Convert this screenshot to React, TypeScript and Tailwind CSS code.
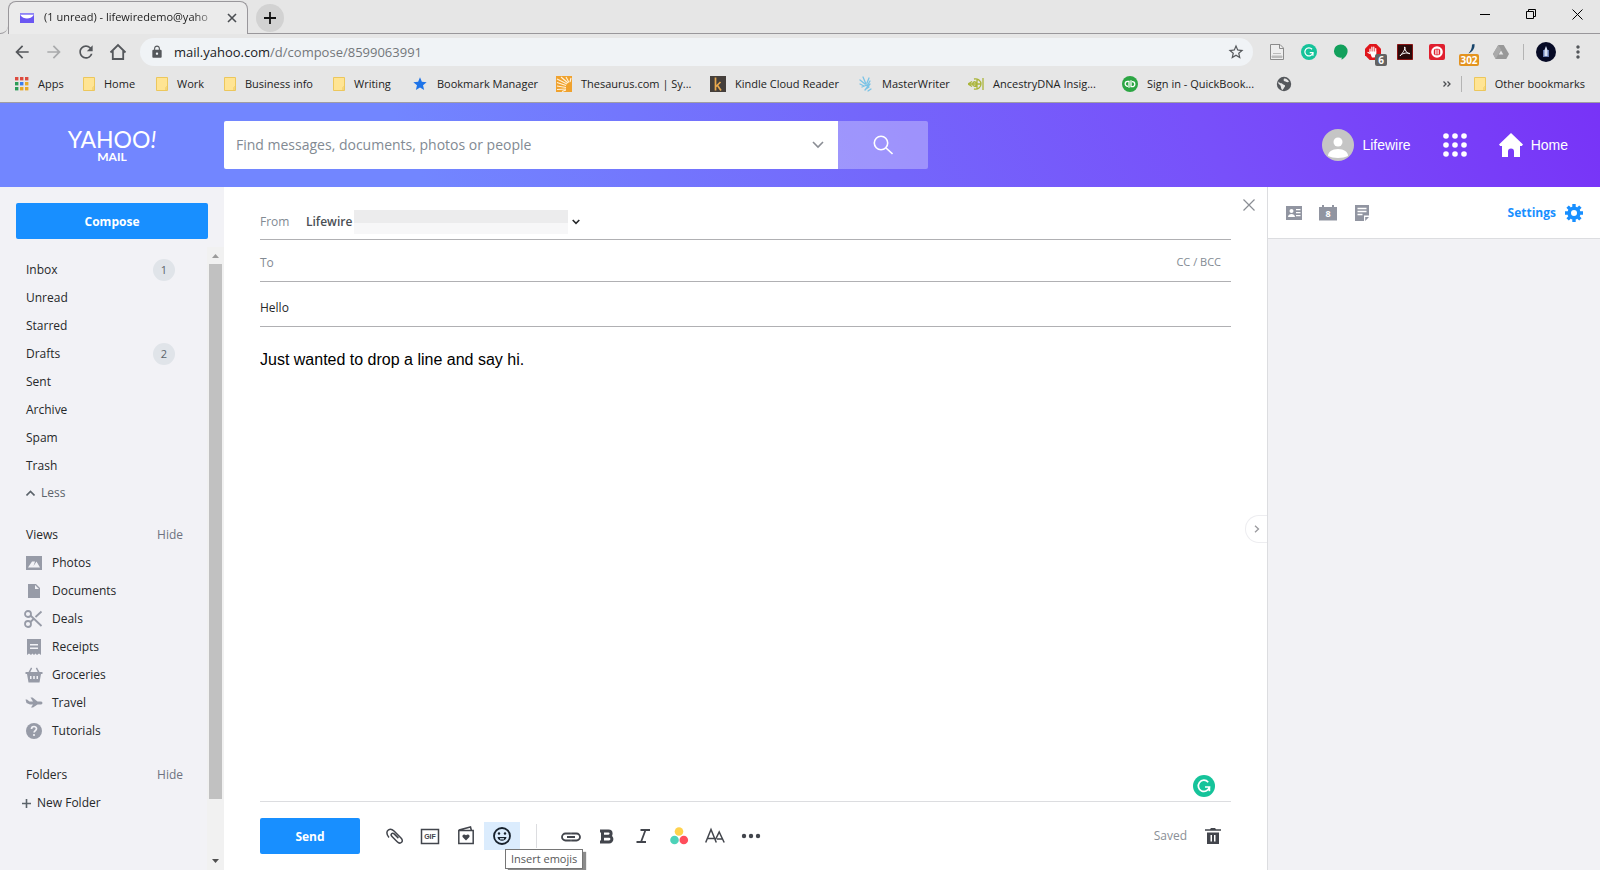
import React, { useState } from "react";
import {
    MdArrowBack,
    MdArrowForward,
    MdLock,
    MdMoreVert,
    MdRefresh,
    MdStar,
    MdStarBorder,
} from "react-icons/md";

type BookmarkProps = { label?: string; icon: React.ReactNode; width: string };

const FolderIcon = () => (
    <svg viewBox="0 0 12 14" className="h-3.5 w-3 shrink-0">
        <path d="M.5.5h11v13H.5z" fill="#ffe493" stroke="#ecc75c" />
        <path d="M10 13.500V10.500l1.500-1.500" fill="none" stroke="#ecc75c" />
    </svg>
);

const AppsIcon = () => (
    <svg viewBox="0 0 14 14" className="h-3.5 w-3.5 shrink-0">
        {["#dd4b3e", "#dd4b3e", "#dd4b3e", "#2b9c57", "#3b7ded", "#e8a927", "#2b9c57", "#e8a927", "#e8a927"].map((c, i) => (
            <rect key={i} x={(i % 3) * 5} y={Math.floor(i / 3) * 5} width="3.400" height="3.400" fill={c} />
        ))}
    </svg>
);

const ThesaurusIcon = () => (
    <svg viewBox="0 0 16 16" className="size-4 shrink-0">
        <path fill="#f0a22e" d="M0 0h16v16H0z" />
        <path
            d="M1 3l10 5M1 6.500l9 3M1 10l9 1.500M1 13.500l9-.5M5 1l7 6M10 1l3 5.500M15 2l-1 4M6 15.500l4-1.500"
            stroke="#fff3dc"
            strokeWidth="1.100"
            fill="none"
        />
        <path d="M16 6.500c-4 .5-6.500 4-5.500 9.500H16z" fill="#f0a22e" />
    </svg>
);

const KindleIcon = () => (
    <svg viewBox="0 0 16 16" className="size-4 shrink-0">
        <path fill="#453f3b" d="M0 0h16v16H0z" />
        <path d="M5.500 1.500v13M10.500 6l-5 5M7.500 9.500l3.500 5" stroke="#e9a94e" strokeWidth="1.700" fill="none" />
    </svg>
);

const MasterWriterIcon = () => (
    <svg viewBox="0 0 14 16" className="h-4 w-3.5 shrink-0">
        <path
            d="M1 4l5 4M4 1l3 7M8 7l2-5M3 11l5-2M6 14l5-6M9 15l3-2M11 5l-3 5M1 8l4 2M10 11l-3 2"
            stroke="#79c3e6"
            strokeWidth="1.300"
            fill="none"
            strokeLinecap="round"
        />
    </svg>
);

const AncestryIcon = () => (
    <svg viewBox="0 0 16 14" className="h-3.5 w-4 shrink-0">
        <path
            d="M0 7h13M4.500 7C5 4 8 4 9 7c-1 3-4 3-4.500 0zM6 2c4-1 7 2 7 5s-3 6-7 5M9 1.500v11M15 1v12M0 7l4-2.500M0 7l4 2.500"
            stroke="#aab53a"
            strokeWidth="1.300"
            fill="none"
        />
    </svg>
);

const QuickBooksIcon = () => (
    <svg viewBox="0 0 16 16" className="size-4 shrink-0">
        <circle cx="8" cy="8" r="8" fill="#2ca644" />
        <path
            d="M7 11.800V5.300H5.700a2.500 2.500 0 0 0 0 5h.3M9 4.200v6.500h1.300a2.500 2.500 0 0 0 0-5H10"
            stroke="#fff"
            strokeWidth="1.300"
            fill="none"
        />
    </svg>
);

const GlobeIcon = () => (
    <svg viewBox="0 0 16 16" className="size-4 shrink-0">
        <circle cx="8" cy="8" r="7.200" fill="#55585c" />
        <path d="M2.500 5.500c1.500 2.500 3 1 4 2.500 1 1 3 .5 2.500 2.500-1 1-1 2-2.500 3.500-2-1-1-3.500-2.500-5-1.500-1-2-1.500-1.500-3.500zM8 2.500c2-.5 4 1 5 3-1 1.500-2.500.5-3.500 0-1.500 0-2.500-1-1.500-3z" fill="#e6e6e6" />
    </svg>
);

const bookmarks: BookmarkProps[] = [
    { label: "Apps", icon: <AppsIcon />, width: "w-[68px]" },
    { label: "Home", icon: <FolderIcon />, width: "w-[73px]" },
    { label: "Work", icon: <FolderIcon />, width: "w-[68px]" },
    { label: "Business info", icon: <FolderIcon />, width: "w-[109px]" },
    { label: "Writing", icon: <FolderIcon />, width: "w-[79px]" },
    { label: "Bookmark Manager", icon: <MdStar className="size-4 shrink-0 text-[#1f74e8]" />, width: "w-[144px]" },
    { label: "Thesaurus.com | Sy...", icon: <ThesaurusIcon />, width: "w-[154px]" },
    { label: "Kindle Cloud Reader", icon: <KindleIcon />, width: "w-[149px]" },
    { label: "MasterWriter", icon: <MasterWriterIcon />, width: "w-[109px]" },
    { label: "AncestryDNA Insig...", icon: <AncestryIcon />, width: "w-[154px]" },
    { label: "Sign in - QuickBook...", icon: <QuickBooksIcon />, width: "w-[154px]" },
    { icon: <GlobeIcon />, width: "w-4" },
];

const GrammarlyIcon = ({ className }: { className: string }) => (
    <svg viewBox="0 0 22 22" className={className}>
        <circle cx="11" cy="11" r="11" fill="#15c39a" />
        <path d="M15.200 7.200A5.600 5.600 0 1 0 16.400 12H12" stroke="#fff" strokeWidth="1.700" fill="none" />
        <path d="M16.400 12v4.200" stroke="#fff" strokeWidth="1.700" />
    </svg>
);

const Extensions = () => (
    <div className="flex items-center gap-4 pl-4">
        <svg viewBox="0 0 16 16" className="size-4">
            <path d="M1.500.5h9.500l3.500 3.500v11.500h-13z" fill="#eee" stroke="#8b8b8b" />
            <path d="M10.500.5v4h4" fill="none" stroke="#8b8b8b" />
            <path d="M4 9.500h8M3 12h10v1.500H3z" fill="#bbb" stroke="#bbb" />
        </svg>
        <GrammarlyIcon className="size-4" />
        <svg viewBox="0 0 16 16" className="size-4">
            <path d="M8 .5a6.600 6.600 0 0 1 6.600 6.600c0 4-3 7-6 8.700v-2.200A6.600 6.600 0 1 1 8 .5z" fill="#12a05c" />
        </svg>
        <div className="relative">
            <svg viewBox="0 0 16 16" className="size-4">
                <path d="M4.700 0h6.600L16 4.700v6.600L11.300 16H4.700L0 11.300V4.700z" fill="#e0151b" />
                <path d="M5 8V5M6.900 8V3.200M8.800 8V3M10.700 8V4.500M3 8.500l2 1" stroke="#fff" strokeWidth="1.200" strokeLinecap="round" />
                <path d="M4.400 7.500h6.900v3.500L9.500 13.500H7z" fill="#fff" />
            </svg>
            <span className="absolute -right-1.5 top-2.5 w-3 rounded-xs bg-[#636363] text-center text-[10px] font-bold leading-3 text-white">
                6
            </span>
        </div>
        <svg viewBox="0 0 16 16" className="size-4">
            <path fill="#2b0b0b" stroke="#8a1414" d="M.5.5h15v15H.5z" />
            <path
                d="M7.500 3c1.500 0 0 4-4.500 9 1-2 6-4 10-2.500-2 1-5-2.500-5.500-6.500z"
                stroke="#fff"
                fill="none"
            />
        </svg>
        <svg viewBox="0 0 16 16" className="size-4">
            <rect width="16" height="16" rx="2" fill="#e01f2f" />
            <circle cx="8" cy="8" r="5.800" fill="#fff" />
            <rect x="4.800" y="4.800" width="6.400" height="6.400" rx="2" fill="#e01f2f" />
            <path d="M6.900 5.500v5M9.100 5.500v5" stroke="#fff" strokeWidth="1.200" />
        </svg>
        <div className="relative">
            <svg viewBox="0 0 16 16" className="size-4">
                <path d="M13.500 0c.5 4-1.500 7.500-6 9.500 2.500-3 3.500-5.500 3.500-9z" fill="#18456b" />
            </svg>
            <span className="absolute -left-0.5 top-2.5 w-5 rounded-xs bg-[#e39320] text-center text-[10px] font-bold leading-3 text-white">
                302
            </span>
        </div>
        <svg viewBox="0 0 16 14" className="h-3.5 w-4">
            <path d="M5.300 0h5.400L16 9l-2.700 5H2.700L0 9z" fill="#989898" />
            <path d="M5.300 0L8 4.600 2.700 14 0 9z" fill="#aaa" />
            <path d="M8 5.500l2.300 4H5.700z" fill="#e5e5e5" />
        </svg>
    </div>
);

const BrowserChrome = () => (
    <header className="border-b border-[#a09da3] bg-[#e6e6e6] text-[11px] text-[#222]">
        <div className="flex h-[34px] items-end">
            <div className="h-2 w-2 rounded-br-lg border-b border-[#99979b]" />
            <div className="relative flex h-[33px] w-60 items-center pl-3 pr-2">
                <div className="absolute inset-x-0 top-0 bottom-0 rounded-t-lg border-x border-t border-[#99979b] bg-[#ebebeb]" />
                <svg viewBox="0 0 14 10" className="relative h-2.5 w-3.5 shrink-0">
                    <path fill="#6b57f2" d="M0 0h14v10H0z" />
                    <path fill="#fff" d="M0 1.500h14c-2 3-4.500 4-7 4s-5-1-7-4z" />
                    <path fill="#8f84f5" d="M0 0h14v1.500H0z" />
                </svg>
                <p className="relative ml-2.5 flex-1 overflow-hidden whitespace-nowrap mask-r-from-85%">
                    (1 unread) - lifewiredemo@yaho
                </p>
                <button aria-label="Close tab" className="relative ml-1 flex size-4 items-center justify-center">
                    <svg viewBox="0 0 10 10" className="size-2.5">
                        <path d="M1 1l8 8M9 1L1 9" stroke="#4b4e52" strokeWidth="1.600" />
                    </svg>
                </button>
            </div>
            <div className="flex h-full flex-1 items-start justify-between border-b border-[#99979b]">
                <button aria-label="New tab" className="ml-2 mt-1 flex size-7 items-center justify-center rounded-full bg-[#d2d2d2]">
                    <svg viewBox="0 0 12 12" className="size-3">
                        <path d="M6 0v12M0 6h12" stroke="#111" strokeWidth="1.800" />
                    </svg>
                </button>
                <div className="flex items-center gap-9 pr-[17px] pt-2">
                    <button aria-label="Minimize" className="flex h-3 w-2.5 items-center">
                        <span className="h-px w-2.5 bg-black" />
                    </button>
                    <button aria-label="Restore">
                        <svg viewBox="0 0 10 10" className="size-2.5" fill="none" stroke="#000">
                            <path d="M.5 2.500h7v7h-7zM2.500 2.500v-2h7v7h-2" />
                        </svg>
                    </button>
                    <button aria-label="Close window">
                        <svg viewBox="0 0 11 11" className="size-[11px]">
                            <path d="M.5.5l10 10M10.500.5l-10 10" stroke="#000" />
                        </svg>
                    </button>
                </div>
            </div>
        </div>

        <div className="flex h-9 items-center pl-3 pr-3 text-[#54575b]">
            <div className="flex items-center gap-3">
                <button aria-label="Back"><MdArrowBack className="size-5" /></button>
                <button aria-label="Forward"><MdArrowForward className="size-5 text-[#a9aaac]" /></button>
                <button aria-label="Reload"><MdRefresh className="size-5" /></button>
                <button aria-label="Home page">
                    <svg viewBox="0 0 20 20" className="size-5" fill="none" stroke="currentColor" strokeWidth="1.800">
                        <path d="M2.500 10.500L10 3l7.500 7.500M4.800 9v8h10.400V9" />
                    </svg>
                </button>
            </div>
            <div className="ml-3 flex h-7 flex-1 items-center rounded-full bg-[#f0f3f6] pl-2.5 pr-2">
                <MdLock className="size-3.5" />
                <p className="ml-2.5 flex-1 text-[13px] leading-5">
                    <span className="text-[#202124]">mail.yahoo.com</span>
                    <span className="text-[#73777b]">/d/compose/8599063991</span>
                </p>
                <button aria-label="Bookmark this page"><MdStarBorder className="size-[18px]" /></button>
            </div>
            <Extensions />
            <div className="ml-3.5 h-4 w-px bg-[#b4b4b4]" />
            <div className="ml-3 size-5 rounded-full bg-[#070b26] p-1">
                <svg viewBox="0 0 12 12" className="size-3">
                    <path d="M3 4h6v7H3z" fill="#6a7fb5" />
                    <path d="M6 0l1.500 4v6h-3V4z" fill="#d7e2f6" />
                </svg>
            </div>
            <button aria-label="Menu" className="ml-3"><MdMoreVert className="size-5" /></button>
        </div>

        <nav className="flex h-8 items-center pb-1 pl-[15px] pr-[15px]">
            {bookmarks.map((b, i) => (
                <a key={i} href="#" aria-label={b.label ?? "Web page"} className={`flex shrink-0 items-center gap-[9px] ${b.width}`}>
                    {b.icon}
                    {b.label && <span className="whitespace-nowrap">{b.label}</span>}
                </a>
            ))}
            <div className="ml-auto flex items-center">
                <button aria-label="More bookmarks">
                    <svg viewBox="0 0 8 6" className="h-1.5 w-2" fill="none" stroke="#4b4e52" strokeWidth="1.300">
                        <path d="M.5.5L3 3 .5 5.500M4.500.5L7 3 4.500 5.500" />
                    </svg>
                </button>
                <div className="ml-2.5 h-4 w-px bg-[#b4b4b4]" />
                <a href="#" className="ml-3 flex items-center gap-[9px]">
                    <FolderIcon />
                    Other bookmarks
                </a>
            </div>
        </nav>
    </header>
);

const YahooHeader = () => (
    <div className="flex h-[84px] items-center bg-[linear-gradient(65deg,#7286ff_26%,#7466fb_55%,#7850fa_75%,#7833f7_100%)] text-white">
        <a href="#" aria-label="Yahoo Mail" className="flex w-56 flex-col items-center font-['Lato']">
            <span className="text-[23px] leading-6">
                YAHOO<span className="italic">!</span>
            </span>
            <span className="text-xs font-bold leading-3">MAIL</span>
        </a>
        <form className="flex h-12 w-[704px]" onSubmit={(e) => e.preventDefault()}>
            <div className="flex flex-1 items-center rounded-l-xs bg-white pl-3 pr-3.5">
                <input
                    aria-label="Search"
                    placeholder="Find messages, documents, photos or people"
                    className="flex-1 text-sm text-black outline-none placeholder:text-[#828a93]"
                />
                <button type="button" aria-label="Search options">
                    <svg viewBox="0 0 12 8" className="h-2 w-3" fill="none" stroke="#8a8d94" strokeWidth="1.600">
                        <path d="M1 1l5 5 5-5" />
                    </svg>
                </button>
            </div>
            <button aria-label="Search mail" className="flex w-[90px] items-center justify-center rounded-r-xs bg-white/30">
                <svg viewBox="0 0 20 20" className="size-5" fill="none" stroke="#fff" strokeWidth="1.600">
                    <circle cx="8" cy="8" r="6.700" />
                    <path d="M13 13l6.500 6" />
                </svg>
            </button>
        </form>
        <div className="ml-auto flex items-center pr-8 font-['Liberation_Sans',sans-serif] text-sm">
            <a href="#" className="flex items-center gap-2">
                <svg viewBox="0 0 32 32" className="size-8">
                    <circle cx="16" cy="16" r="16" fill="#c5c5c5" />
                    <circle cx="16" cy="13" r="4.500" fill="#fff" />
                    <path d="M6 27c0-4 4-7 10-7s10 3 10 7c-5 2.500-15 2.500-20 0z" fill="#fff" />
                </svg>
                Lifewire
            </a>
            <button aria-label="Yahoo apps" className="ml-8">
                <svg viewBox="0 0 24 24" className="size-6" fill="#fff">
                    {[3, 12, 21].map((y) => [3, 12, 21].map((x) => <circle key={`${x}-${y}`} cx={x} cy={y} r="2.800" />))}
                </svg>
            </button>
            <a href="#" className="ml-8 flex items-center gap-2">
                <svg viewBox="0 0 24 24" className="size-6" fill="#fff">
                    <path d="M12 0l12 11.500-1.200 1.500H21v11h-6v-5.500a3 3 0 0 0-6 0V24H3V13H1.200L0 11.500z" />
                </svg>
                Home
            </a>
        </div>
    </div>
);

const mailboxes = [
    { label: "Inbox", count: 1 },
    { label: "Unread" },
    { label: "Starred" },
    { label: "Drafts", count: 2 },
    { label: "Sent" },
    { label: "Archive" },
    { label: "Spam" },
    { label: "Trash" },
];

const views = [
    {
        label: "Photos",
        icon: <path fillRule="evenodd" d="M1 2h16v14H1zM3 13.500h12l-3.500-6-3 4.500L10 7.500H7L3 13.500z" />,
    },
    { label: "Documents", icon: <path d="M3 2h8l4 4v10H3zM10 3v4h4z" fillRule="evenodd" /> },
    {
        label: "Deals",
        icon: (
            <g fill="none" stroke="currentColor" strokeWidth="1.800">
                <circle cx="3" cy="4" r="3" />
                <circle cx="3" cy="14" r="3" />
                <path d="M5.500 5.500L16.500 16M5.500 12l3-3M10.500 7L16.500 1.500" />
            </g>
        ),
    },
    {
        label: "Receipts",
        icon: <path fillRule="evenodd" d="M2 1h14v16l-2-1.500-2 1.500-1.500-1.500L9 17l-1.500-1.500L6 17l-2-1.500L2 17zM5 6v1.500h8V6zM5 9.500V11h8V9.500z" />,
    },
    {
        label: "Groceries",
        icon: (
            <path
                fillRule="evenodd"
                d="M.5 6h3L6 1.500l1.200.7L5.300 6h7.400l-1.900-3.800 1.200-.7L14.500 6h3v2H16l-1.500 8.500h-11L2 8H.5zM5 10v3h1.500v-3zM8.200 10v3h1.600v-3zM11.500 10v3H13v-3z"
            />
        ),
    },
    { label: "Travel", icon: <path d="M.5 5.500h1.500l2.500 2H8L5.500 3.500h2l5 4h3c1.200 0 2 .7 2 1.500s-.8 1.500-2 1.500h-3L8 13.500H6l2-3H5L1.500 9z" /> },
    {
        label: "Tutorials",
        icon: (
            <>
                <circle cx="9" cy="9" r="8" />
                <path d="M6.500 7c0-3.300 5-3.200 5-.3 0 1.800-2.400 1.900-2.400 3.800" fill="none" stroke="#f2f2f6" strokeWidth="1.700" />
                <circle cx="9" cy="13" r="1.100" fill="#f2f2f6" />
            </>
        ),
    },
];

const SectionTitle = ({ label }: { label: string }) => (
    <div className="flex h-7 items-center justify-between pr-6">
        <h2>{label}</h2>
        <button className="text-[#6e7280]">Hide</button>
    </div>
);

const Sidebar = () => (
    <aside className="flex w-56 shrink-0 flex-col bg-[#f2f2f6] text-xs text-[#26282a]">
        <button className="ml-4 mr-4 mt-4 h-9 shrink-0 rounded-xs bg-[#188fff] pt-0.5 font-bold text-white">Compose</button>
        <div className="mt-2 flex min-h-0 flex-1">
            <nav className="flex-1 overflow-hidden pl-[26px] pt-[9px]">
                <ul>
                    {mailboxes.map((m) => (
                        <li key={m.label} className="flex h-7 items-center justify-between pr-8">
                            <a href="#">{m.label}</a>
                            {m.count && (
                                <span className="flex size-[22px] items-center justify-center rounded-full bg-[#e0e4e9] text-[11px] text-[#5b636a]">
                                    {m.count}
                                </span>
                            )}
                        </li>
                    ))}
                </ul>
                <button className="flex h-[26px] items-center gap-1.5 text-[#5b636a]">
                    <svg viewBox="0 0 9 6" className="h-1.5 w-[9px]" fill="none" stroke="currentColor" strokeWidth="1.600">
                        <path d="M.5 5.500l4-4 4 4" />
                    </svg>
                    Less
                </button>
                <div className="mt-[15px]">
                    <SectionTitle label="Views" />
                    <ul>
                        {views.map((v) => (
                            <li key={v.label}>
                                <a href="#" className="flex h-7 items-center gap-2.5">
                                    <svg viewBox="1 1 16 16" className="size-4 overflow-visible text-[#979ba7]" fill="currentColor">
                                        {v.icon}
                                    </svg>
                                    {v.label}
                                </a>
                            </li>
                        ))}
                    </ul>
                </div>
                <div className="mt-4">
                    <SectionTitle label="Folders" />
                    <button className="-ml-1 flex h-7 items-center gap-1.5">
                        <svg viewBox="0 0 9 9" className="size-[9px]" stroke="#5b636a" strokeWidth="1.600">
                            <path d="M4.500 0v9M0 4.500h9" />
                        </svg>
                        New Folder
                    </button>
                </div>
            </nav>
            <div className="flex w-[17px] flex-col items-center bg-[#f1f1f1]">
                <svg viewBox="0 0 7 4" className="mb-1.5 mt-[7px] h-1 w-[7px] shrink-0" fill="#9b9b9b">
                    <path d="M0 4l3.500-4L7 4z" />
                </svg>
                <div className="w-full flex-1">
                    <div className="mx-auto h-[91%] w-[13px] bg-[#c1c1c1]" />
                </div>
                <svg viewBox="0 0 7 4" className="my-[7px] h-1 w-[7px] shrink-0" fill="#505050">
                    <path d="M0 0l3.500 4L7 0z" />
                </svg>
            </div>
        </div>
    </aside>
);

const GifIcon = () => (
    <svg viewBox="0 0 20 20" className="size-5">
        <path d="M1.500 3.500h17v14h-17z" fill="none" stroke="currentColor" strokeWidth="1.500" />
        <text x="10" y="13" textAnchor="middle" fontSize="7" fontWeight="bold" fontFamily="Liberation Sans" fill="currentColor">
            GIF
        </text>
    </svg>
);

const leftTools = [
    {
        label: "Attach files",
        icon: (
            <svg viewBox="0 0 20 20" className="size-5" fill="none" stroke="currentColor" strokeWidth="1.500">
                <path d="M5 11.500C2 8 2.500 5 4.500 3.800s4-.3 5.500 1.200l7 7c1.500 1.500 1.700 3.200.6 4.300s-2.900 1-4.400-.5L8 10.500c-1-1-1.200-2-.4-2.800s1.800-.6 2.800.4l4 4" />
            </svg>
        ),
    },
    { label: "Insert GIFs", icon: <GifIcon /> },
    {
        label: "Insert greeting card",
        icon: (
            <svg viewBox="0 0 20 20" className="size-5" fill="none" stroke="currentColor" strokeWidth="1.500">
                <path d="M2.800 4.500h14.400v13H2.800zM3 4l11.500-3 .8 3" />
                <path d="M10 14.500l-3.200-3.200c-1.500-2 1.200-4 3.200-2 2-2 4.700 0 3.200 2z" fill="currentColor" stroke="none" />
            </svg>
        ),
    },
    {
        label: "Insert emojis",
        icon: (
            <svg viewBox="0 0 20 20" className="size-5" fill="none" stroke="currentColor" strokeWidth="1.800">
                <circle cx="10" cy="10" r="8" />
                <path d="M5.500 11h9c-.5 5-8.500 5-9 0z" fill="currentColor" stroke="none" />
                <path d="M8 12.800h4" stroke="#dbecfd" strokeWidth="1.300" />
                <circle cx="7" cy="7.500" r="1.200" fill="currentColor" stroke="none" />
                <circle cx="13" cy="7.500" r="1.200" fill="currentColor" stroke="none" />
            </svg>
        ),
    },
];

const rightTools = [
    {
        label: "Insert link",
        icon: (
            <svg viewBox="0 0 20 20" className="size-5" fill="none" stroke="currentColor" strokeWidth="1.800">
                <path d="M9 13.500v1H4.500a3.500 3.500 0 0 1 0-7H9v1M11 8.500v-1h4.500a3.500 3.500 0 0 1 0 7H11v-1M6 11h8" />
            </svg>
        ),
    },
    {
        label: "Bold",
        icon: (
            <svg viewBox="0 0 20 20" className="size-5" fill="none" stroke="currentColor" strokeWidth="3">
                <path d="M5.500 5h6a2.600 2.600 0 0 1 0 5.200h-6M5.500 10.200H12a2.800 2.800 0 0 1 0 5.800H5.500V5M3 5h3M3 16h3" />
            </svg>
        ),
    },
    {
        label: "Italic",
        icon: (
            <svg viewBox="0 0 20 20" className="size-5" fill="none" stroke="currentColor" strokeWidth="1.800">
                <path d="M7.500 4h9.500M3.500 16H13M12.500 4L8 16" />
            </svg>
        ),
    },
    {
        label: "Text color",
        icon: (
            <svg viewBox="0 0 20 20" className="size-5">
                <circle cx="10" cy="5.500" r="4.300" fill="#ffd24d" />
                <circle cx="5.500" cy="14" r="4.300" fill="#4dd2b8" />
                <circle cx="14.800" cy="14" r="4.300" fill="#ff4d5b" />
            </svg>
        ),
    },
    {
        label: "Text size",
        icon: (
            <svg viewBox="0 0 20 20" className="size-5" fill="none" stroke="currentColor" strokeWidth="1.500">
                <path d="M.7 16.500L6 3.500l5.300 13M2.500 12.500h7M10.500 13.500l3.700-7.500 5 10.500M12 13h5.500" />
            </svg>
        ),
    },
    {
        label: "More formatting",
        icon: (
            <svg viewBox="0 0 20 20" className="size-5" fill="currentColor">
                <circle cx="3" cy="10" r="2.200" />
                <circle cx="10" cy="10" r="2.200" />
                <circle cx="17" cy="10" r="2.200" />
            </svg>
        ),
    },
];

const ComposeToolbar = () => (
    <div className="flex h-[69px] shrink-0 items-center border-t border-[#dcdde0] text-[#42454c]">
        <button className="mr-4 h-9 w-[100px] rounded-xs bg-[#188fff] pt-0.5 font-bold text-white">Send</button>
        {leftTools.map((t) => (
            <div key={t.label} className="relative">
                <button
                    aria-label={t.label}
                    className={
                        t.label === "Insert emojis"
                            ? "flex h-7 w-9 items-center justify-center bg-[#dbecfd] text-[#17212c]"
                            : "flex h-7 w-9 items-center justify-center"
                    }
                >
                    {t.icon}
                </button>
                {t.label === "Insert emojis" && (
                    <span
                        role="tooltip"
                        className="absolute left-[21px] top-[27px] whitespace-nowrap border border-[#767676] bg-white px-[5px] text-[11px] leading-[18px] text-[#575757] shadow-[3px_3px_1px_#8b8b8b]"
                    >
                        {t.label}
                    </span>
                )}
            </div>
        ))}
        <div className="mx-4 h-6 w-px bg-[#dcdde0]" />
        {rightTools.map((t) => (
            <button key={t.label} aria-label={t.label} className="flex h-7 w-9 items-center justify-center">
                {t.icon}
            </button>
        ))}
        <span className="ml-auto text-[#8a8f96]">Saved</span>
        <button aria-label="Delete draft" className="ml-[18px] mr-2.5">
            <svg viewBox="0 0 16 16" className="size-4" fill="currentColor">
                <path d="M0 1.200h5L6 0h4l1 1.200h5v1.600H0z" />
                <path fillRule="evenodd" d="M2 4.500h12V16H2zM5.500 7v6.500H7V7zM9 7v6.500h1.500V7z" />
            </svg>
        </button>
    </div>
);

const Compose = () => {
    const [subject, setSubject] = useState("Hello")
    const [body, setBody] = useState("Just wanted to drop a line and say hi.")

    return (
        <main className="relative flex min-w-0 flex-1 flex-col bg-white px-9 text-xs">
            <button aria-label="Close message" className="absolute right-3 top-3">
                <svg viewBox="0 0 12 12" className="size-3">
                    <path d="M.5.5l11 11M11.500.5l-11 11" stroke="#8a8d94" strokeWidth="1.200" />
                </svg>
            </button>
            <div className="flex h-[53px] shrink-0 items-center border-b border-[#b0b0b3] pt-[18px]">
                <label htmlFor="from" className="w-[46px] text-[#828a93]">From</label>
                <select id="from" className="w-12 appearance-none font-semibold text-[#4b4f55] outline-none">
                    <option>Lifewire</option>
                </select>
                <div className="h-6 w-[214px] bg-[linear-gradient(#ececed_55%,#f7f7f8_55%)]" />
                <svg viewBox="0 0 8 6" className="ml-1 h-1.5 w-2" fill="none" stroke="#26282a" strokeWidth="1.600">
                    <path d="M.7 1L4 4.300 7.300 1" />
                </svg>
            </div>
            <div className="flex h-[42px] shrink-0 items-center border-b border-[#b0b0b3] pt-1 text-[#828a93]">
                <label htmlFor="to">To</label>
                <input id="to" className="ml-2 flex-1 outline-none" />
                <button className="pr-2.5 text-[11px]">CC / BCC</button>
            </div>
            <div className="flex h-[45px] shrink-0 items-center border-b border-[#b0b0b3] pt-2">
                <input
                    aria-label="Subject"
                    value={subject}
                    onChange={(e) => setSubject(e.target.value)}
                    className="flex-1 text-[#26282a] outline-none"
                />
            </div>
            <div className="relative flex min-h-0 flex-1">
                <textarea
                    aria-label="Message body"
                    value={body}
                    onChange={(e) => setBody(e.target.value)}
                    className="flex-1 resize-none pt-[21px] font-['Liberation_Sans',sans-serif] text-base text-black outline-none"
                />
                <GrammarlyIcon className="absolute bottom-1 right-4 size-[22px]" />
            </div>
            <ComposeToolbar />
            <button
                aria-label="Collapse panel"
                className="absolute right-0 top-1/2 flex h-7 w-[22px] -translate-y-1/2 items-center justify-center rounded-l-full border border-r-0 border-[#ededf0] bg-white"
            >
                <svg viewBox="0 0 6 8" className="h-2 w-1.5" fill="none" stroke="#9a9a9e" strokeWidth="1.300">
                    <path d="M1 .7L4.500 4 1 7.300" />
                </svg>
            </button>
        </main>
    )
}

const SidePanel = () => (
    <aside className="w-[333px] shrink-0 border-l border-[#dcdde0] bg-[#f2f2f5]">
        <div className="flex h-[52px] items-center gap-4 border-b border-[#dcdde0] bg-white pl-[17px] pr-4">
            <button aria-label="Contacts">
                <svg viewBox="0 0 18 16" className="h-4 w-[18px]" fill="#9195a1">
                    <path d="M1 1h16v14H1z" />
                    <g fill="#fff">
                        <circle cx="6.500" cy="6" r="2" />
                        <path d="M3 12c0-4 7-4 7 0zM11 4h4.500v1.200H11zM11 7h4.500v1.200H11zM11 10h4.500v1.200H11z" />
                    </g>
                </svg>
            </button>
            <button aria-label="Calendar">
                <svg viewBox="0 0 18 16" className="h-4 w-[18px]">
                    <path d="M0 2h3V0h2v2h8V0h2v2h3v13.500H0z" fill="#9195a1" />
                    <text x="9" y="12" textAnchor="middle" fontSize="9" fontWeight="bold" fontFamily="Open Sans" fill="#fff">
                        8
                    </text>
                </svg>
            </button>
            <button aria-label="Notepad">
                <svg viewBox="0 0 18 16" className="h-4 w-[18px]" fill="#9195a1">
                    <path d="M2 0h14v10.500h-5V16H2z" />
                    <path d="M12.200 12H16l-3.800 4z" />
                    <path d="M4.500 3.500h9M4.500 6.500h9M4.500 9.500h5" stroke="#fff" strokeWidth="1.300" />
                </svg>
            </button>
            <button className="ml-auto flex items-center gap-2 text-xs font-bold text-[#188fff]">
                Settings
                <svg viewBox="0 0 20 20" className="size-5" fill="none" stroke="currentColor">
                    <circle cx="10" cy="10" r="4.800" strokeWidth="3.600" />
                    <path
                        d="M10 1v3M10 16v3M1 10h3M16 10h3M3.600 3.600l2.200 2.200M14.200 14.200l2.200 2.200M3.600 16.400l2.200-2.200M14.200 5.800l2.200-2.200"
                        strokeWidth="3.400"
                    />
                </svg>
            </button>
        </div>
    </aside>
);

export default function App() {
    return (
        <div className="flex h-screen flex-col font-['Open_Sans',sans-serif]">
            <BrowserChrome />
            <YahooHeader />
            <div className="flex min-h-0 flex-1">
                <Sidebar />
                <Compose />
                <SidePanel />
            </div>
        </div>
    )
}
